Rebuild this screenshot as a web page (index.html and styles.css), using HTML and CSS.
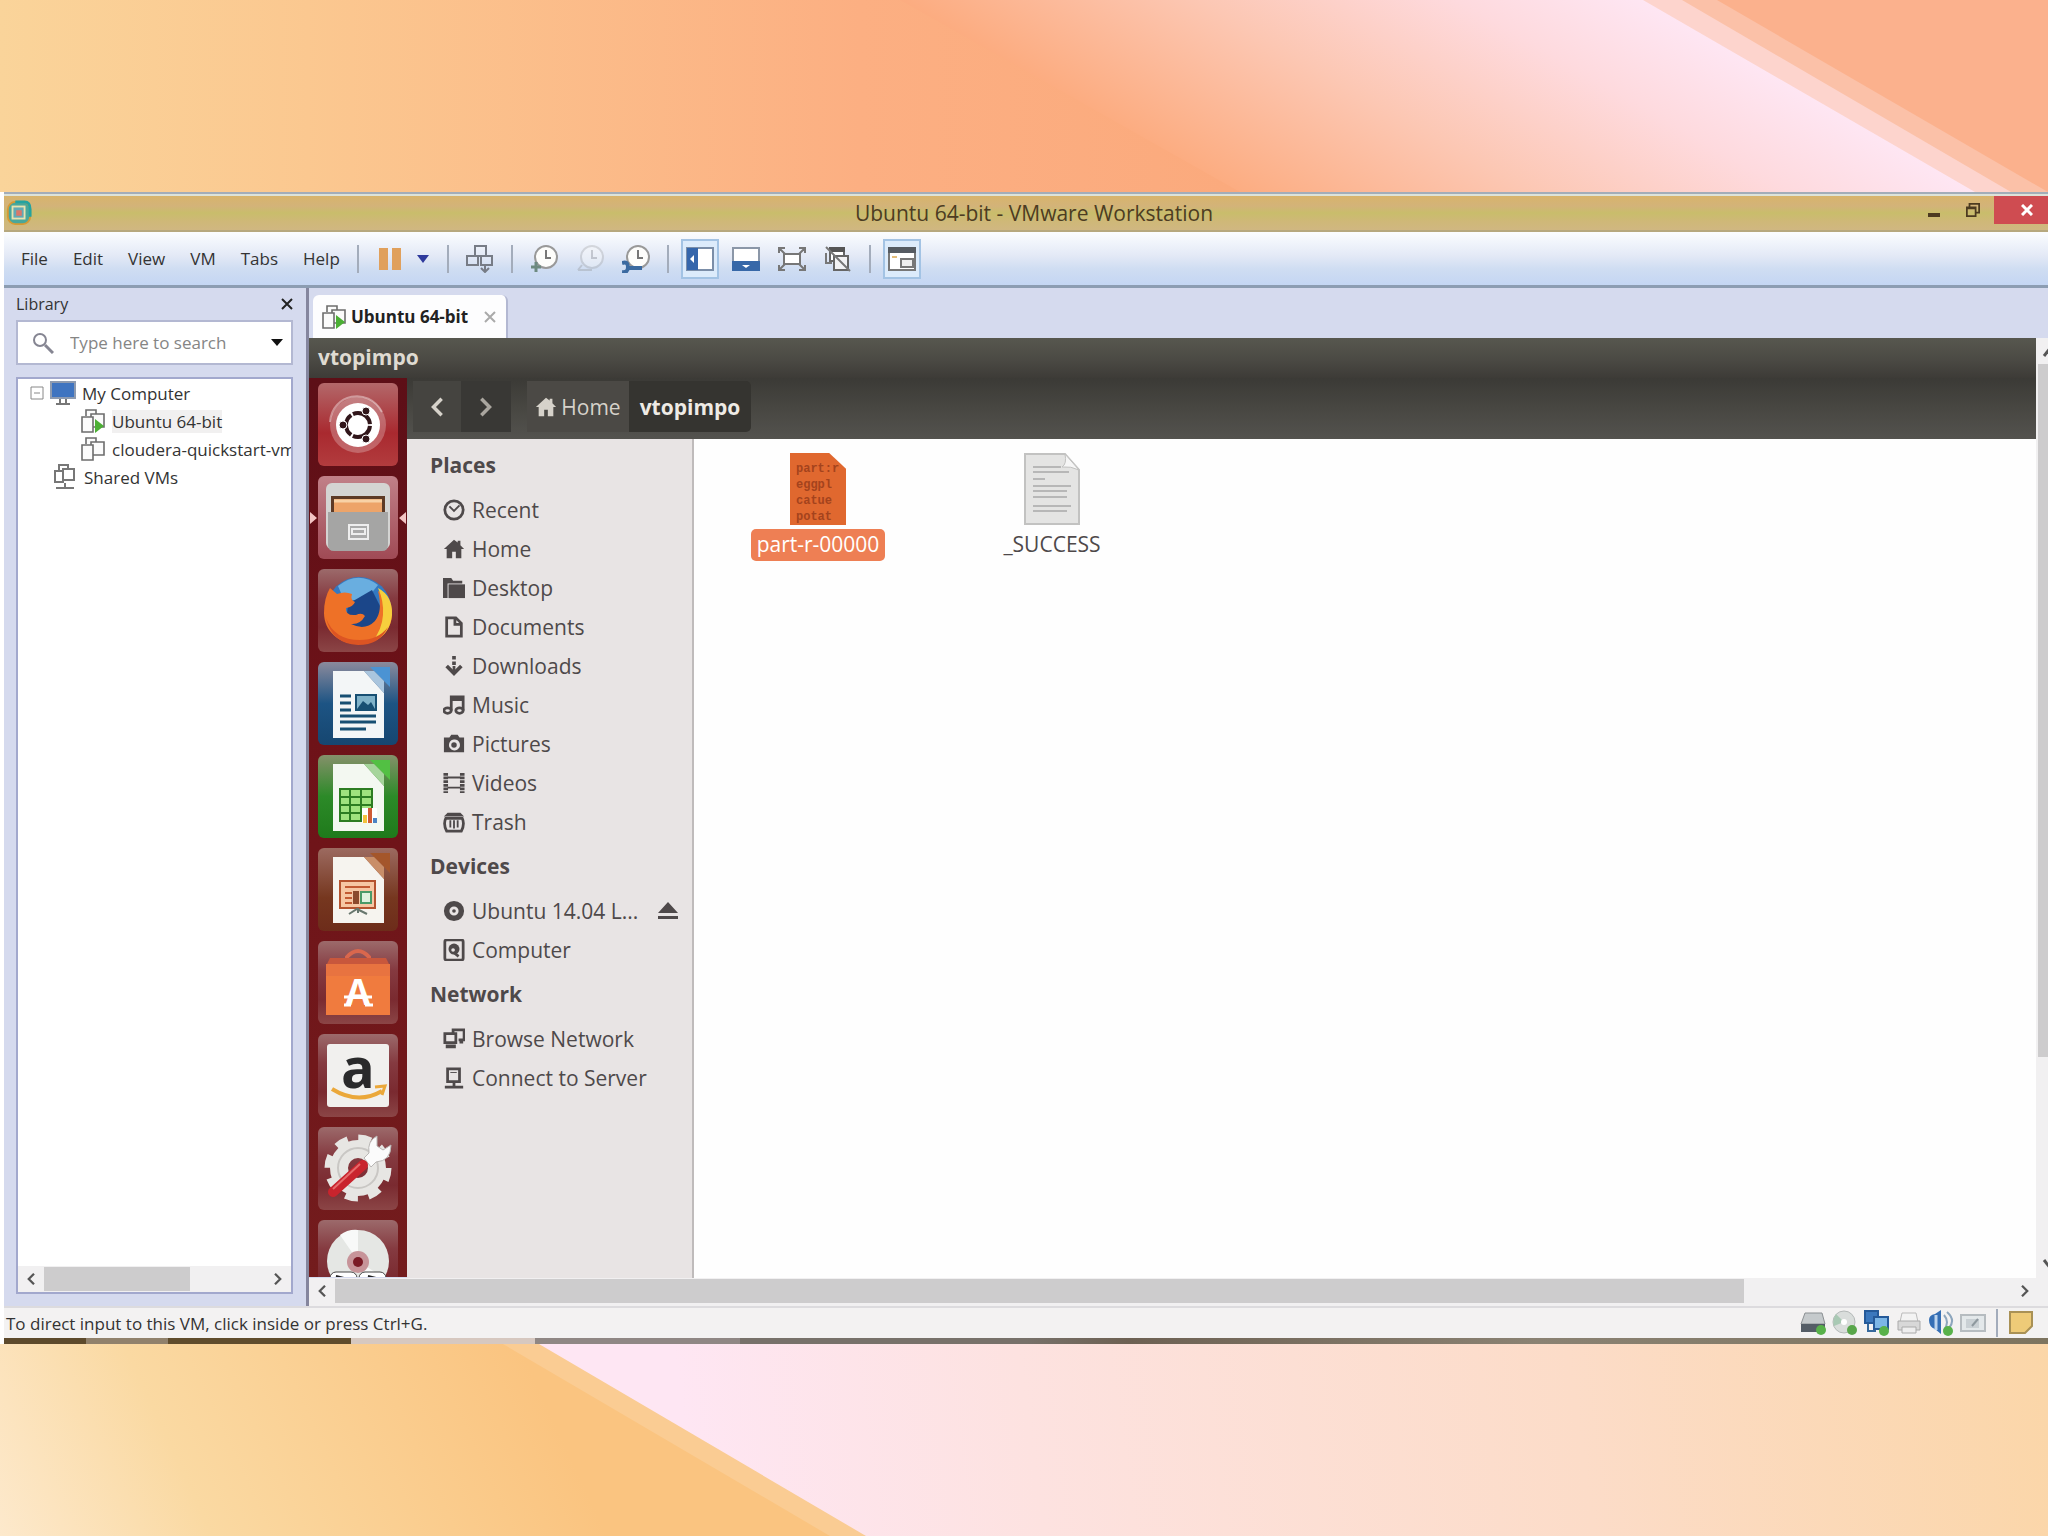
FILE: index.html
```html
<!DOCTYPE html>
<html lang="en">

<head>
    <meta charset="UTF-8">
    <meta name="viewport" content="width=device-width, initial-scale=1.0">
    <title>Ubuntu 64-bit - VMware Workstation</title>
    <link rel="stylesheet" href="styles.css">
</head>

<body>
    <!-- shared icons -->
    <svg class="defs" width="0" height="0" aria-hidden="true">
        <symbol id="i-vm" viewBox="0 0 26 26">
            <g fill="#fbfbfb" stroke="#6d6d6d" stroke-width="1.6">
                <path d="M6 8V2h10v4" />
                <path d="M11 6h13v13H11z" />
                <path d="M2 9h11v15H2z" />
            </g>
        </symbol>
        <symbol id="i-vm-on" viewBox="0 0 26 26">
            <use href="#i-vm" />
            <path d="M15 11l9 7-9 7z" fill="#4caf35" />
        </symbol>
        <symbol id="i-home" viewBox="0 0 24 24">
            <path d="M12 2L1 12h3v10h6v-7h4v7h6V12h3l-4-4V3h-3v2z" fill="currentColor" />
        </symbol>
        <symbol id="i-left" viewBox="0 0 12 16">
            <path d="M10 1L3 8l7 7" fill="none" stroke="currentColor" stroke-width="3" />
        </symbol>
        <symbol id="i-right" viewBox="0 0 12 16">
            <path d="M2 1l7 7-7 7" fill="none" stroke="currentColor" stroke-width="3" />
        </symbol>
        <symbol id="i-clock" viewBox="0 0 28 28">
            <circle cx="16" cy="12" r="11" fill="#fdfdfb" stroke="#999" stroke-width="2" />
            <path d="M16 5v8h5" fill="none" stroke="#777" stroke-width="2" />
        </symbol>
    </svg>

    <div class="band">
        <svg viewBox="0 0 2048 192" preserveAspectRatio="none" aria-hidden="true">
            <defs>
                <linearGradient id="topBase">
                    <stop offset="0" stop-color="#fad49a" />
                    <stop offset=".15" stop-color="#fbc890" />
                    <stop offset=".42" stop-color="#fcaf82" />
                    <stop offset=".6" stop-color="#fbaa7d" />
                </linearGradient>
                <linearGradient id="topPink" gradientUnits="userSpaceOnUse" x1="900" y1="0" x2="1086" y2="-322">
                    <stop offset="0" stop-color="#fcac80" />
                    <stop offset=".4" stop-color="#fcc7b3" />
                    <stop offset=".75" stop-color="#fedade" />
                    <stop offset="1" stop-color="#fee6f3" />
                </linearGradient>
            </defs>
            <rect width="2048" height="192" fill="url(#topBase)" />
            <path d="M900 0h1148v192h-808z" fill="url(#topPink)" />
            <path d="M1643 0h405v192h-73z" fill="#fdd4cd" />
            <path d="M1682 0h366v192h-37z" fill="#fbc1a8" />
            <path d="M1717 0h331v192z" fill="#fbb18d" />
        </svg>
    </div>

    <main class="window">
        <header class="titlebar">
            <svg class="app-icon" viewBox="0 0 28 28" aria-hidden="true">
                <rect x="2" y="2" width="24" height="24" rx="8" fill="#4aa79a" stroke="#d79a35" stroke-width="2" />
                <path d="M10 2h10q6 0 6 8v8" fill="none" stroke="#24a3a0" stroke-width="3" />
                <rect x="7" y="7" width="13" height="13" fill="#62a9b5" stroke="#e8e3b0" stroke-width="2" />
                <rect x="11" y="11" width="6" height="6" fill="#d9786a" />
            </svg>
            <h1>Ubuntu 64-bit - VMware Workstation</h1>
            <div class="win-buttons">
                <button class="min" aria-label="Minimize"><svg viewBox="0 0 12 4"><path d="M0 2h12" stroke="#4c3a20" stroke-width="4" /></svg></button>
                <button class="restore" aria-label="Restore"><svg viewBox="0 0 16 16"><path d="M1 5h10v10H1zM4 5V1h11v10h-4M1 6h10" fill="none" stroke="#4c3a20" stroke-width="2" /></svg></button>
                <button class="close" aria-label="Close"><svg viewBox="0 0 12 12"><path d="M1 1l10 10M11 1L1 11" stroke="#fff" stroke-width="3" /></svg></button>
            </div>
        </header>

        <nav class="menubar">
            <button>File</button>
            <button>Edit</button>
            <button>View</button>
            <button>VM</button>
            <button>Tabs</button>
            <button>Help</button>
            <div class="tools">
                <i class="sep"></i>
                <button class="pause" aria-label="Suspend"><svg viewBox="0 0 22 24"><path d="M0 1h9v22H0zM13 1h9v22h-9z" fill="#e0a05c" /></svg></button>
                <button class="drop" aria-label="Power options"><svg viewBox="0 0 12 8"><path d="M0 0h12L6 8z" fill="#2e3a9c" /></svg></button>
                <i class="sep"></i>
                <button class="tool" aria-label="Send Ctrl+Alt+Del"><svg viewBox="0 0 28 28"><path d="M9 1h11v10H9zM1 11h11v9H1zM15 11h11v9H15zM19 20v7M15 23l4 4 4-4" fill="none" stroke="#777c86" stroke-width="2" /></svg></button>
                <i class="sep"></i>
                <button class="tool" aria-label="Take snapshot"><svg viewBox="0 0 28 28"><use href="#i-clock" /><path d="M6 17v10M1 22h10" stroke="#6d8a80" stroke-width="3" /></svg></button>
                <button class="tool faded" aria-label="Revert snapshot"><svg viewBox="0 0 28 28"><use href="#i-clock" /><path d="M2 25h14M6 20l-4 5" stroke="#888" stroke-width="2" fill="none" /></svg></button>
                <button class="tool" aria-label="Manage snapshots"><svg viewBox="0 0 28 28"><use href="#i-clock" /><path d="M0 18q6-2 6 4t-6 5M6 23h14" stroke="#3b6aa0" stroke-width="4" fill="none" /></svg></button>
                <i class="sep"></i>
                <button class="tool on" aria-label="Show library"><svg viewBox="0 0 28 28"><path d="M1 3h26v22H1z" fill="#fff" stroke="#7b8ea8" stroke-width="2" /><path d="M1 3h11v22H1z" fill="#3566ab" /><path d="M8 10l-4 4 4 4z" fill="#fff" /></svg></button>
                <button class="tool" aria-label="Show thumbnails"><svg viewBox="0 0 28 28"><path d="M1 3h26v22H1z" fill="#fff" stroke="#8b97a8" stroke-width="2" /><path d="M0 16h28v10H0z" fill="#3768a8" /><path d="M10 20h8l-4 3z" fill="#fff" /></svg></button>
                <button class="tool" aria-label="Full screen"><svg viewBox="0 0 28 28"><path d="M6 9h16v10H6z" fill="#fff" stroke="#777" stroke-width="2" /><path d="M1 8V3h6M21 3h6v5M27 20v5h-6M7 25H1v-5M2 4l5 5M26 4l-5 5M2 24l5-5M26 24l-5-5" fill="none" stroke="#777" stroke-width="2" /></svg></button>
                <button class="tool" aria-label="Unity"><svg viewBox="0 0 28 28"><path d="M6 4h14v12H6z" fill="#fff" stroke="#666" stroke-width="2" /><path d="M5 2h16v5H5z" fill="#555" /><path d="M10 11h14v14H10z" fill="#f2f2f4" stroke="#666" stroke-width="2" /><path d="M2 2l24 24M2 8v10h6" fill="none" stroke="#777" stroke-width="2" /></svg></button>
                <i class="sep"></i>
                <button class="tool on" aria-label="Console view"><svg viewBox="0 0 28 28"><path d="M1 3h26v22H1z" fill="#fff" stroke="#777" stroke-width="2" /><path d="M0 2h28v6H0z" fill="#555b62" /><path d="M13 14h12v8H13z" fill="#eee" stroke="#777" stroke-width="2" /><path d="M4 12h5" stroke="#e2bd7c" stroke-width="2" /></svg></button>
            </div>
        </nav>

        <div class="workspace">
            <aside class="library">
                <div class="library-head">
                    <h2>Library</h2>
                    <button aria-label="Close library"><svg viewBox="0 0 12 12"><path d="M1 1l10 10M11 1L1 11" stroke="#222" stroke-width="2" /></svg></button>
                </div>
                <div class="search">
                    <svg class="lens" viewBox="0 0 22 22" aria-hidden="true"><circle cx="8" cy="8" r="6" fill="none" stroke="#858592" stroke-width="2" /><path d="M13 13l8 8" stroke="#858592" stroke-width="3" /></svg>
                    <input type="text" aria-label="Search library" placeholder="Type here to search">
                    <button aria-label="Search options"><svg viewBox="0 0 12 7"><path d="M0 0h12L6 7z" fill="#111" /></svg></button>
                </div>
                <div class="tree">
                    <ul>
                        <li>
                            <svg class="expander" viewBox="0 0 14 14" aria-hidden="true"><path d="M1 1h12v12H1zM4 7h6" fill="#fff" stroke="#888" /></svg>
                            <svg class="ico" viewBox="0 0 26 26" aria-hidden="true"><path d="M1 2h24v16H1z" fill="#3f74c0" stroke="#8e9bb0" stroke-width="2" /><path d="M10 19v5M16 19v5M6 24h14" stroke="#777" stroke-width="2" /></svg>
                            My Computer
                        </li>
                        <li class="child"><svg class="ico"><use href="#i-vm-on" /></svg><span class="current">Ubuntu 64-bit</span></li>
                        <li class="child"><svg class="ico"><use href="#i-vm" /></svg>cloudera-quickstart-vm</li>
                        <li class="shared">
                            <svg class="ico" viewBox="0 0 26 26" aria-hidden="true"><path d="M7 6V1h9v4M3 7h8v11H3zM11 5h11v11H11zM13 19v5M4 24h18" fill="none" stroke="#777" stroke-width="2" /></svg>
                            Shared VMs
                        </li>
                    </ul>
                    <div class="hscroll">
                        <svg class="arrow"><use href="#i-left" /></svg>
                        <div class="track"><div class="thumb"></div></div>
                        <svg class="arrow"><use href="#i-right" /></svg>
                    </div>
                </div>
            </aside>

            <section class="console">
                <div class="tabs">
                    <div class="tab">
                        <svg class="ico"><use href="#i-vm-on" /></svg>
                        <span>Ubuntu 64-bit</span>
                        <button aria-label="Close tab"><svg viewBox="0 0 12 12"><path d="M1 1l10 10M11 1L1 11" stroke="#aaa" stroke-width="2" /></svg></button>
                    </div>
                </div>
                <div class="view">
                    <div class="guest">
                        <div class="panel">vtopimpo</div>
                        <div class="desktop">
                            <nav class="launcher">
                                <button class="tile dash" aria-label="Dash">
                                    <svg viewBox="0 0 80 82">
                                        <circle cx="40" cy="41" r="28" fill="#fff" opacity=".25" />
                                        <path d="M12 38C14 10 50 2 64 28" fill="none" stroke="#fff" stroke-width="2" opacity=".4" />
                                        <circle cx="40" cy="41" r="22" fill="#fff" />
                                        <circle cx="40" cy="41" r="12" fill="none" stroke="#31161a" stroke-width="4" stroke-dasharray="23 2" stroke-dashoffset="-1" />
                                        <g fill="#31161a" stroke="#fff"><circle cx="25" cy="41" r="4" /><circle cx="48" cy="27" r="4" /><circle cx="48" cy="55" r="4" /></g>
                                    </svg>
                                </button>
                                <button class="tile files" aria-label="Files">
                                    <svg viewBox="0 0 80 82">
                                        <rect x="8" y="6" width="64" height="66" rx="6" fill="#d4d4d2" />
                                        <path d="M13 19h54v16H13z" fill="#5d3a25" />
                                        <path d="M16 22h48v14H16z" fill="#eda469" />
                                        <path d="M16 24h48" stroke="#f8d2a6" stroke-width="3" />
                                        <path d="M10 35h60v33q0 6-6 6H16q-6 0-6-6z" fill="#a5a5a4" />
                                        <rect x="31" y="48" width="19" height="14" fill="#aaa" stroke="#eee" stroke-width="2" />
                                        <path d="M34 52h13v5H34z" fill="none" stroke="#eee" stroke-width="2" />
                                        <path d="M-8 35l7 6-7 6zM88 35l-7 6 7 6z" fill="#f3c5c4" />
                                    </svg>
                                </button>
                                <button class="tile" aria-label="Firefox">
                                    <svg viewBox="0 0 80 82">
                                        <circle cx="41" cy="39" r="32" fill="#3479c1" />
                                        <path d="M20 16Q40 0 60 15L48 30H26z" fill="#69aee0" />
                                        <path d="M30 34l24-14 10 20-12 20-24-6z" fill="#1b4689" />
                                        <path d="M12 18l7 6q8-3 15 0-2 6 3 8-2 5-9 6-1 8 10 7 6-3 9 1-5 9-14 8 14 7 24-3 8-10 3-30 14 8 14 22c0 20-15 31-34 31S6 61 6 43q0-15 6-25z" fill="#ee7127" />
                                        <path d="M60 18q15 8 14 27-2 20-20 27 10-12 11-27 1-14-5-27z" fill="#f6cf3d" />
                                        <path d="M8 48q8 22 34 22 18 0 28-13-8 18-30 18Q14 74 8 48z" fill="#dc5423" />
                                    </svg>
                                </button>
                                <button class="tile writer" aria-label="Writer">
                                    <svg viewBox="0 0 80 82">
                                        <path d="M52 4h20v20z" fill="#4b93d3" />
                                        <path d="M15 8h31l20 22v45H15z" fill="#f3f6f7" />
                                        <path d="M46 8l20 22V18L56 8z" fill="#a9c5de" />
                                        <path d="M22 33h11M22 40h11M22 47h11M22 53h36M22 59h36M22 66h26" stroke="#174f73" stroke-width="3" />
                                        <path d="M38 32h20v15H38z" fill="#7fb2c9" stroke="#174f73" stroke-width="2" />
                                        <path d="M39 46l6-8 5 4 3-3 4 7z" fill="#174f73" />
                                    </svg>
                                </button>
                                <button class="tile calc" aria-label="Calc">
                                    <svg viewBox="0 0 80 82">
                                        <path d="M52 4h20v20z" fill="#52c043" />
                                        <path d="M15 8h31l20 22v45H15z" fill="#f3f8f1" />
                                        <path d="M46 8l20 22V18L56 8z" fill="#a5d59b" />
                                        <path d="M22 33h32v32H22z" fill="#9fe27e" stroke="#2c7d22" stroke-width="2" />
                                        <path d="M22 41h32M22 49h32M22 57h32M32 33v32M43 33v32" stroke="#2c7d22" stroke-width="2" />
                                        <path d="M44 52h15v15H44z" fill="#fff" />
                                        <path d="M45 59h4v8h-4z" fill="#f3c23e" /><path d="M50 52h4v15h-4z" fill="#cf5b35" /><path d="M55 62h4v5h-4z" fill="#4b83c4" />
                                    </svg>
                                </button>
                                <button class="tile impress" aria-label="Impress">
                                    <svg viewBox="0 0 80 82">
                                        <path d="M52 4h20v20z" fill="#a4562b" />
                                        <path d="M15 8h31l20 22v44H15z" fill="#f6f4ef" />
                                        <path d="M46 8l20 22V18L56 8z" fill="#c98e68" />
                                        <path d="M22 32h35v27H22z" fill="#f6c7a4" stroke="#b4532f" stroke-width="2" />
                                        <path d="M27 38h25M27 44h7M27 49h7M27 54h7" stroke="#c25a33" stroke-width="2" />
                                        <path d="M35 42h6v13h-6z" fill="#8c4a2d" />
                                        <path d="M43 43h10v11H43z" fill="#dff1df" stroke="#4a9a68" stroke-width="2" />
                                        <path d="M31 65l8-5 10 5M40 59v5" fill="none" stroke="#68776e" stroke-width="2" />
                                    </svg>
                                </button>
                                <button class="tile" aria-label="Ubuntu Software Center">
                                    <svg viewBox="0 0 80 82">
                                        <path d="M29 24V15q11-12 22 0v9" fill="none" stroke="#d9674d" stroke-width="4" />
                                        <path d="M12 16h56l4 8H8z" fill="#c8573c" />
                                        <path d="M8 22h64v51H8z" fill="#f07b3e" />
                                        <path d="M8 22h64v12H8z" fill="#e87340" />
                                        <text x="40" y="63" text-anchor="middle" class="bag-letter">A</text>
                                        <path d="M26 55h28M26 63h7M47 63h8" stroke="#fff" stroke-width="3" />
                                    </svg>
                                </button>
                                <button class="tile" aria-label="Amazon">
                                    <svg viewBox="0 0 80 82">
                                        <rect x="9" y="9" width="62" height="63" rx="3" fill="#f1f0ee" />
                                        <text x="40" y="53" text-anchor="middle" class="amazon-letter">a</text>
                                        <path d="M14 54q26 16 50 2" fill="none" stroke="#eba83a" stroke-width="4" />
                                        <path d="M57 52l10-1-3 9" fill="none" stroke="#eba83a" stroke-width="3" />
                                    </svg>
                                </button>
                                <button class="tile" aria-label="System Settings">
                                    <svg viewBox="0 0 80 82">
                                        <circle cx="40" cy="40" r="28" fill="none" stroke="#e7e6e3" stroke-width="11" stroke-dasharray="12 10" />
                                        <circle cx="40" cy="40" r="19" fill="none" stroke="#e7e6e3" stroke-width="18" />
                                        <circle cx="40" cy="40" r="20" fill="none" stroke="#c9c7c4" stroke-width="2" />
                                        <path d="M46 30l5-5q-2-12 8-17v10l6 4 8-5q0 16-15 17l-5 5z" fill="#fbfbfb" stroke="#b9b7b5" />
                                        <path d="M15 64l30-27" stroke="#c9242d" stroke-width="10" stroke-linecap="round" />
                                        <path d="M15 61l27-25" stroke="#e66b6b" stroke-width="2" />
                                    </svg>
                                </button>
                                <button class="tile" aria-label="Install media">
                                    <svg viewBox="0 0 80 82">
                                        <circle cx="40" cy="40" r="31" fill="#e5e7e4" />
                                        <path d="M40 40L22 14q8-6 18-5zM40 40l18 26 8-9z" fill="#f8f9f8" />
                                        <circle cx="40" cy="41" r="11" fill="#c79499" />
                                        <circle cx="40" cy="41" r="5" fill="#7a1a25" />
                                        <rect x="12" y="51" width="27" height="20" rx="6" fill="#fff" stroke="#444" />
                                        <rect x="41" y="51" width="27" height="20" rx="6" fill="#fff" stroke="#444" />
                                        <path d="M18 55l8 2M50 55l8 2" stroke="#222" stroke-width="2" />
                                    </svg>
                                </button>
                            </nav>

                            <div class="nautilus">
                                <div class="pathbar">
                                    <button class="nav-btn back" aria-label="Back"><svg><use href="#i-left" /></svg></button>
                                    <button class="nav-btn" aria-label="Forward"><svg><use href="#i-right" /></svg></button>
                                    <button class="crumb"><svg><use href="#i-home" /></svg>Home</button>
                                    <button class="crumb here">vtopimpo</button>
                                </div>
                                <div class="browser">
                                    <nav class="places">
                                        <h3>Places</h3>
                                        <a href="#"><svg viewBox="0 0 24 24"><circle cx="12" cy="12" r="10" fill="none" stroke="currentColor" stroke-width="3" /><path d="M7 8l5 5 6-6" fill="none" stroke="currentColor" stroke-width="2" /></svg>Recent</a>
                                        <a href="#"><svg><use href="#i-home" /></svg>Home</a>
                                        <a href="#"><svg viewBox="0 0 24 24"><path d="M0 1h9l2 3h10v3H5v16H0z" fill="currentColor" /><path d="M6 8h18v15H6z" fill="currentColor" /></svg>Desktop</a>
                                        <a href="#"><svg viewBox="0 0 24 24"><path d="M4 2h10l6 6v14H4zM13 2v7h7" fill="none" stroke="currentColor" stroke-width="3" /></svg>Documents</a>
                                        <a href="#"><svg viewBox="0 0 24 24"><path d="M12 1v4M12 7v4" stroke="currentColor" stroke-width="4" /><path d="M4 12l8 8 8-8" fill="none" stroke="currentColor" stroke-width="4" /><path d="M12 12v7" stroke="currentColor" stroke-width="3" /></svg>Downloads</a>
                                        <a href="#"><svg viewBox="0 0 24 24"><path d="M9 18V3h13v15M9 6h13" fill="none" stroke="currentColor" stroke-width="3" /><ellipse cx="5" cy="18" rx="4" ry="3" fill="none" stroke="currentColor" stroke-width="3" /><ellipse cx="18" cy="18" rx="4" ry="3" fill="none" stroke="currentColor" stroke-width="3" /></svg>Music</a>
                                        <a href="#"><svg viewBox="0 0 24 24"><path fill-rule="evenodd" d="M1 5h6l2-3h7l2 3h5v16H1zM12 7a6 6 0 1 0 1 0z" fill="currentColor" /><circle cx="12" cy="13" r="3" fill="currentColor" /></svg>Pictures</a>
                                        <a href="#"><svg viewBox="0 0 24 24"><path d="M3 1v22M21 1v22" stroke="currentColor" stroke-width="5" stroke-dasharray="3 1" /><path d="M5 6h14M5 17h14" stroke="currentColor" stroke-width="2" /></svg>Videos</a>
                                        <a href="#"><svg viewBox="0 0 24 24"><path d="M5 2h14l4 4H1z" fill="currentColor" /><path d="M3 8q-3 6 1 14h16q4-8 1-14z" fill="none" stroke="currentColor" stroke-width="3" /><path d="M8 10v8M12 10v9M16 10v8" stroke="currentColor" stroke-width="2" /></svg>Trash</a>
                                        <h3>Devices</h3>
                                        <a href="#"><svg viewBox="0 0 24 24"><circle cx="12" cy="12" r="8" fill="none" stroke="currentColor" stroke-width="6" /><circle cx="12" cy="12" r="2" fill="currentColor" /></svg>Ubuntu 14.04 L...<svg class="eject" viewBox="0 0 20 18"><path d="M10 0l10 11H0zM0 14h20v3H0z" fill="currentColor" /></svg></a>
                                        <a href="#"><svg viewBox="0 0 24 24"><rect x="2" y="1" width="20" height="22" rx="2" fill="none" stroke="currentColor" stroke-width="3" /><circle cx="12" cy="11" r="6" fill="currentColor" /><circle cx="11" cy="12" r="2" fill="#e8e4e4" /><path d="M12 15l5 4" stroke="currentColor" stroke-width="3" /></svg>Computer</a>
                                        <h3>Network</h3>
                                        <a href="#"><svg viewBox="0 0 24 24"><path d="M11 6V2h12v11h-6" fill="none" stroke="currentColor" stroke-width="3" /><path d="M2 6h12v10H2z" fill="none" stroke="currentColor" stroke-width="3" /><path d="M3 18h11v4H3zM18 13h4v4h-4z" fill="currentColor" /></svg>Browse Network</a>
                                        <a href="#"><svg viewBox="0 0 24 24"><path d="M5 2h13v14H5zM12 16v6M2 22h20" fill="none" stroke="currentColor" stroke-width="3" /><path d="M8 6h7" stroke="currentColor" /></svg>Connect to Server</a>
                                    </nav>
                                    <div class="icons">
                                        <figure class="selected">
                                            <div class="thumb-text">part:r<br>eggpl<br>catue<br>potat</div>
                                            <figcaption>part-r-00000</figcaption>
                                        </figure>
                                        <figure>
                                            <svg class="doc" viewBox="0 0 56 72">
                                                <path d="M1 1h40l14 16v54H1z" fill="#e4e4e3" stroke="#c2c2c1" stroke-width="2" />
                                                <path d="M41 1q2 10-3 13 9-1 17 3z" fill="#f6f6f6" stroke="#c2c2c1" />
                                                <path d="M9 14h28M9 19h36M9 26h12M9 33h38M9 38h34M9 44h34M9 53h38M9 58h34" stroke="#b7b7b7" stroke-width="2" />
                                            </svg>
                                            <figcaption>_SUCCESS</figcaption>
                                        </figure>
                                    </div>
                                </div>
                            </div>
                        </div>
                    </div>
                    <div class="vscroll">
                        <svg class="cap" viewBox="0 0 12 26"><path d="M6 18l7-9" stroke="#555" stroke-width="3" /></svg>
                        <div class="vtrack"><div class="thumb"></div></div>
                        <svg class="cap" viewBox="0 0 12 26"><path d="M6 8l7 9" stroke="#555" stroke-width="3" /></svg>
                    </div>
                </div>
                <div class="hscroll">
                    <svg class="arrow"><use href="#i-left" /></svg>
                    <div class="track"><div class="thumb"></div></div>
                    <svg class="arrow"><use href="#i-right" /></svg>
                </div>
            </section>
        </div>

        <footer class="statusbar">
            <p>To direct input to this VM, click inside or press Ctrl+G.</p>
            <div class="devices">
                <svg viewBox="0 0 26 26"><path d="M5 3h17l3 11H1z" fill="#c5cacc" stroke="#8b9093" /><path d="M1 14h24v8H1z" fill="#545d66" /><circle cx="21" cy="20" r="5" fill="#58b14a" /></svg>
                <svg viewBox="0 0 26 26"><circle cx="12" cy="12" r="11" fill="#d9dddb" stroke="#b4b9b8" /><path d="M12 12L4 4q-4 6-2 12z" fill="#a9c9b4" /><circle cx="12" cy="12" r="3" fill="#fff" /><circle cx="20" cy="20" r="5" fill="#58a64a" /></svg>
                <svg viewBox="0 0 26 26"><path d="M1 1h13v12H1z" fill="#3b78bd" stroke="#255a99" stroke-width="2" /><path d="M10 7h14v12H10z" fill="#7cb6e6" stroke="#255a99" stroke-width="2" /><path d="M4 14v7h8" fill="none" stroke="#36699d" stroke-width="2" /><circle cx="20" cy="21" r="5" fill="#58b14a" /></svg>
                <svg viewBox="0 0 26 26"><path d="M6 3h14l2 9H4z" fill="#f3f3f3" stroke="#bbb" /><path d="M2 11h22v9H2z" fill="#d8d8d8" stroke="#aaa" /><path d="M6 17h14v6H6z" fill="#eee" stroke="#aaa" /></svg>
                <svg viewBox="0 0 26 26"><path d="M1 10q0-5 6-6l6-4v24l-6-5q-6-2-6-9z" fill="#356fb5" /><path d="M8 5v15" stroke="#bdd5ee" stroke-width="3" /><path d="M16 5q6 7 0 15M19 2q9 8 2 16" fill="none" stroke="#8da6bd" stroke-width="2" /><circle cx="20" cy="21" r="5" fill="#58b14a" /></svg>
                <svg viewBox="0 0 26 26"><path d="M1 5h24v16H1z" fill="#e3e8ea" stroke="#b6bcc0" stroke-width="2" /><path d="M6 9h13v9H6z" fill="#c9d0d4" /><path d="M12 16l6-7" stroke="#8e989e" stroke-width="2" /></svg>
                <i class="sep"></i>
                <svg viewBox="0 0 26 26"><path d="M2 2h22v14l-7 7H2z" fill="#eecb78" stroke="#a99155" stroke-width="2" /></svg>
            </div>
        </footer>
        <div class="taskbar-edge"></div>
    </main>

    <div class="band">
        <svg viewBox="0 0 2048 192" preserveAspectRatio="none" aria-hidden="true">
            <defs>
                <linearGradient id="botLeft" gradientUnits="userSpaceOnUse" x1="0" y1="192" x2="500" y2="-40">
                    <stop offset="0" stop-color="#fde9cc" />
                    <stop offset=".35" stop-color="#fad9a2" />
                    <stop offset="1" stop-color="#fac480" />
                </linearGradient>
                <linearGradient id="botRight" gradientUnits="userSpaceOnUse" x1="700" y1="192" x2="2048" y2="0">
                    <stop offset="0" stop-color="#fee6f3" />
                    <stop offset=".25" stop-color="#fde2e0" />
                    <stop offset=".65" stop-color="#fcdcc8" />
                    <stop offset="1" stop-color="#fbd6a8" />
                </linearGradient>
            </defs>
            <rect width="2048" height="192" fill="url(#botRight)" />
            <path d="M0 0h539l327 192H0z" fill="#facc93" />
            <path d="M0 0h503l327 192H0z" fill="url(#botLeft)" />
        </svg>
    </div>
</body>

</html>
```

FILE: styles.css
```css
* {
    box-sizing: border-box;
}

body {
    margin: 0;
    min-height: 100vh;
    display: grid;
    grid-template-columns: minmax(0, 1fr);
    grid-template-rows: 12.5vh 1fr 12.5vh;
    font-family: "Open Sans", "Noto Sans", sans-serif;
    font-size: 17px;
    color: #333;
}

h1,
h2,
h3,
p,
ul,
figure {
    margin: 0;
    padding: 0;
    font-weight: normal;
}

button {
    border: 0;
    padding: 0;
    background: none;
    font: inherit;
    color: inherit;
    display: flex;
    align-items: center;
    justify-content: center;
}

svg {
    display: block;
    flex: none;
}

.defs {
    position: absolute;
}

.band svg {
    width: 100%;
    height: 100%;
}

.window {
    display: flex;
    flex-direction: column;
    margin-left: 4px;
    border-top: 2px solid #a3adb8;
    background: #f1f0f1;
}

/* title bar */
.titlebar {
    display: grid;
    grid-template-columns: 1fr auto 1fr;
    align-items: center;
    height: 38px;
    border-top: 2px solid #dde3da;
    border-bottom: 2px solid #b6a87e;
    background: linear-gradient(#d8b46c, #d3b379 30%, #c9bd6b 50%, #cfb878 75%, #d0b781);
}

.app-icon {
    width: 26px;
    height: 28px;
    margin-left: 2px;
}

.titlebar h1 {
    padding-left: 16px;
    font-size: 21px;
    line-height: 28px;
    color: #4c3c22;
}

.win-buttons {
    display: flex;
    align-self: start;
    justify-content: flex-end;
    gap: 26px;
}

.win-buttons button {
    height: 28px;
}

.min svg {
    width: 12px;
    height: 4px;
    margin-top: 10px;
}

.restore svg {
    width: 14px;
    height: 16px;
}

.win-buttons .close {
    width: 54px;
    padding-left: 12px;
    margin-left: -12px;
    background: #cf4c51;
}

.close svg {
    width: 12px;
    height: 12px;
}

/* menu and tools */
.menubar {
    display: flex;
    align-items: center;
    gap: 25px;
    height: 56px;
    padding: 0 17px;
    border-bottom: 3px solid #8c9db2;
    background: linear-gradient(#fbfdff, #e3e9f6 45%, #cfddf2 70%, #c4d6f3);
}

.tools {
    display: flex;
    align-items: center;
    gap: 16px;
    margin-left: -8px;
}

.sep {
    width: 2px;
    height: 28px;
    background: #a3acbb;
}

.pause {
    margin-left: 4px;
}

.pause svg {
    width: 22px;
    height: 24px;
}

.drop {
    margin-right: 2px;
}

.drop svg {
    width: 12px;
    height: 8px;
}

.tool {
    width: 30px;
    height: 40px;
}

.tool svg {
    width: 28px;
    height: 28px;
}

.tool.on {
    width: 38px;
    margin: 0 -4px;
    border: 2px solid #a3c3e4;
    background: #dcebfb;
}

.tool.faded {
    opacity: 0.3;
}

/* library */
.workspace {
    flex: 1;
    display: flex;
    background: #d5daee;
}

.library {
    flex: none;
    width: 305px;
    display: flex;
    flex-direction: column;
    padding: 0 13px 12px 12px;
    border-right: 3px solid #85869e;
}

.library-head {
    display: flex;
    align-items: center;
    justify-content: space-between;
    height: 32px;
}

.library-head h2 {
    font-size: 16px;
}

.library-head svg {
    width: 12px;
    height: 12px;
}

.search {
    display: flex;
    align-items: center;
    height: 45px;
    margin-bottom: 12px;
    padding: 0 8px 0 14px;
    border: 2px solid #b3b8d2;
    background: #fff;
}

.lens {
    width: 22px;
    height: 22px;
}

.search input {
    flex: 1;
    min-width: 0;
    padding: 0 0 0 16px;
    border: 0;
    outline: 0;
    background: none;
    font: inherit;
}

.search input::placeholder {
    color: #858585;
    opacity: 1;
}

.search button svg {
    width: 12px;
    height: 7px;
}

.tree {
    flex: 1;
    display: flex;
    flex-direction: column;
    justify-content: space-between;
    border: 2px solid #a2a8cd;
    background: #fff;
    overflow: hidden;
}

.tree ul {
    list-style: none;
}

.tree li {
    display: flex;
    align-items: center;
    gap: 6px;
    height: 28px;
    padding-left: 12px;
    white-space: nowrap;
}

.tree .child {
    padding-left: 62px;
}

.tree .shared {
    padding-left: 34px;
}

.current {
    background: #f1f0f0;
}

.expander {
    width: 14px;
    height: 14px;
}

.ico {
    width: 26px;
    height: 26px;
}

/* scroll bars */
.hscroll {
    display: flex;
    height: 26px;
    background: #f1f0f1;
    color: #555;
}

.hscroll .arrow {
    width: 26px;
    height: 12px;
    margin: 7px 0;
}

.track {
    flex: 1;
    padding: 1px 0;
}

.thumb {
    height: 100%;
    background: #cdcccd;
}

.tree .thumb {
    width: 66%;
}

.console > .hscroll {
    padding-right: 10px;
}

.console > .hscroll .thumb {
    width: 84%;
}

.vscroll {
    flex: none;
    display: flex;
    flex-direction: column;
    width: 12px;
    padding-left: 2px;
    background: #f1f0f1;
}

.cap {
    width: 12px;
    height: 26px;
}

.vtrack {
    flex: 1;
}

.vtrack .thumb {
    height: 78%;
}

/* console */
.console {
    flex: 1;
    min-width: 0;
    display: flex;
    flex-direction: column;
    border-bottom: 2px solid #f1f0f1;
}

.tabs {
    display: flex;
    align-items: flex-end;
    height: 50px;
    padding-left: 4px;
}

.tab {
    display: flex;
    align-items: center;
    gap: 4px;
    height: 43px;
    padding: 0 10px 0 8px;
    border-right: 2px solid #b3b8d2;
    border-radius: 6px 6px 0 0;
    background: #fdfdfe;
    font-weight: bold;
    color: #222;
}

.tab button {
    margin-left: 12px;
}

.tab button svg {
    width: 12px;
    height: 12px;
}

.view {
    flex: 1;
    display: flex;
}

.guest {
    flex: 1;
    min-width: 0;
    display: flex;
    flex-direction: column;
    color: #4e494a;
    font-size: 21px;
}

.panel {
    height: 40px;
    padding-left: 9px;
    background: linear-gradient(#57574f, #4c4b45 50%, #3d3b37);
    font-weight: bold;
    line-height: 38px;
    color: #dfdbd2;
}

.desktop {
    flex: 1;
    display: flex;
}

/* the launcher is cut off by the bottom of the view */
.launcher {
    flex: none;
    width: 98px;
    height: 899px;
    display: flex;
    flex-direction: column;
    gap: 10px;
    padding: 5px 9px 0;
    background: linear-gradient(#5d0f17, #6e1218 40%, #731c1d);
    overflow: hidden;
}

.tile {
    flex: none;
    height: 83px;
    border-radius: 6px;
    background: linear-gradient(#9c6a6b, #853a40 35%, #7a2a30 70%, #8b4546);
}

.tile svg {
    width: 80px;
    height: 82px;
    overflow: visible;
}

.dash {
    background: linear-gradient(#b3686a, #a9292f 60%, #b23c3e);
}

.files {
    background: linear-gradient(#c18088, #a04a55);
}

.writer {
    background: linear-gradient(#8b8a9c, #1d5484 50%, #164670);
}

.calc {
    background: linear-gradient(#85906a, #2c8a28 50%, #1f7a1b);
}

.impress {
    background: linear-gradient(#9c6a60, #76371f 60%, #6d2c1a);
}

.bag-letter {
    font: bold 36px "Open Sans", sans-serif;
    fill: #fff;
}

.amazon-letter {
    font: bold 56px "Open Sans", sans-serif;
    fill: #2a2a2b;
}

.nautilus {
    flex: 1;
    min-width: 0;
    display: flex;
    flex-direction: column;
}

.pathbar {
    display: flex;
    height: 61px;
    padding: 3px 6px 7px;
    background: linear-gradient(#3b3a36, #484742 50%, #53524e);
    color: #d6d2ca;
}

.nav-btn {
    width: 50px;
    background: #393835;
    color: #aaa69f;
}

.nav-btn.back {
    width: 48px;
    background: #454440;
    color: #d6d2ca;
}

.nav-btn svg {
    width: 14px;
    height: 20px;
}

.crumb {
    gap: 4px;
    width: 102px;
    background: #4b4945;
}

.crumb svg {
    width: 22px;
    height: 22px;
}

.nav-btn + .crumb {
    margin-left: 16px;
}

.crumb.here {
    width: 122px;
    border-radius: 0 5px 5px 0;
    background: #353430;
    font-weight: bold;
    color: #eeebe5;
}

.browser {
    flex: 1;
    display: flex;
}

.places {
    flex: none;
    width: 287px;
    padding: 1px 14px 0 23px;
    border-right: 2px solid #bfbbbb;
    background: #e8e4e4;
}

.places h3 {
    height: 50px;
    font-size: 21px;
    font-weight: bold;
    line-height: 50px;
}

.places a {
    display: flex;
    align-items: center;
    gap: 7px;
    height: 39px;
    padding-left: 13px;
    color: inherit;
    text-decoration: none;
    white-space: nowrap;
}

.places svg {
    width: 22px;
    height: 22px;
}

.places .eject {
    width: 20px;
    height: 18px;
    margin-left: auto;
}

.icons {
    flex: 1;
    display: flex;
    align-items: flex-start;
    padding: 14px 7px;
    background: #fefefe;
}

.icons figure {
    width: 234px;
    display: flex;
    flex-direction: column;
    align-items: center;
    gap: 4px;
}

.icons figcaption {
    height: 32px;
    padding: 0 6px;
    border-radius: 5px;
    line-height: 30px;
}

.selected figcaption {
    background: #ee7f54;
    color: #fff;
}

.doc,
.thumb-text {
    width: 56px;
    height: 72px;
}

.thumb-text {
    padding: 8px 0 0 6px;
    background: #e0682f;
    clip-path: polygon(0 0, 70% 0, 100% 22%, 100% 100%, 0 100%);
    font: bold 12px/16px "Liberation Mono", monospace;
    color: #a4431d;
}

/* status bar */
.statusbar {
    display: flex;
    align-items: center;
    justify-content: space-between;
    height: 32px;
    padding: 0 14px 0 2px;
    border-top: 2px solid #dcdbde;
    background: #f3f2f2;
}

.devices {
    display: flex;
    align-items: center;
    gap: 6px;
}

.devices svg {
    width: 26px;
    height: 26px;
}

.devices .sep {
    margin: 0 4px;
}

.taskbar-edge {
    height: 6px;
    background: linear-gradient(90deg, #5d4a2c 4%, #90816c 4% 8%, #5f4c2c 8% 17%, #d6c8c0 17% 26%, #8f8784 26% 36%, #77716a 36% 50%, #6d6153 55%, #8a8273 75%, #7d745f);
}
```
